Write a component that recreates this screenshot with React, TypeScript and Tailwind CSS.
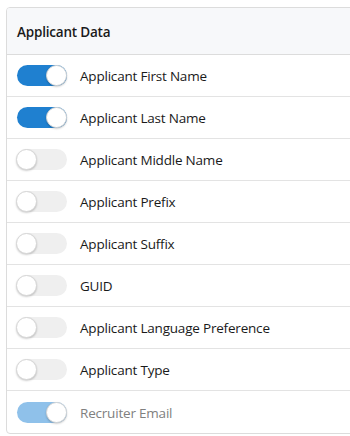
import React from "react";

type Item = { label: string; on: boolean; disabled?: boolean };

const items: Item[] = [
  { label: "Applicant First Name", on: true },
  { label: "Applicant Last Name", on: true },
  { label: "Applicant Middle Name", on: false },
  { label: "Applicant Prefix", on: false },
  { label: "Applicant Suffix", on: false },
  { label: "GUID", on: false },
  { label: "Applicant Language Preference", on: false },
  { label: "Applicant Type", on: false },
  { label: "Recruiter Email", on: true, disabled: true },
];

function Toggle({ on, disabled }: { on: boolean; disabled?: boolean }) {
  const track = on
    ? disabled
      ? "bg-[#8fc1ea]"
      : "bg-[#1f80d0]"
    : "bg-[#efefef]";
  return (
    <div className={`relative w-[50px] h-[21px] rounded-full ${track} shrink-0`}>
      <div
        className={`absolute top-0 ${on ? "right-0" : "left-[-1px]"} w-[21px] h-[21px] rounded-full bg-white border border-[#d6d6d6] shadow-[0_1px_2px_rgba(0,0,0,0.2)]`}
      />
    </div>
  );
}

export default function App() {
  return (
    <div className="w-[350px] h-[436px] bg-white pl-[6px] pt-[7px] font-['Open_Sans',sans-serif]">
      <div className="w-[360px] border border-[#dcdcdc] rounded-[4px] overflow-hidden">
        <div className="h-[47px] bg-[#f7f8fa] border-b border-[#dcdcdc] flex items-center pl-[10px]">
          <span className="mt-[2px] text-[13.5px] font-semibold text-[#1a1a1a] tracking-[-0.2px]">
            Applicant Data
          </span>
        </div>
        {items.map((it, i) => (
          <div
            key={it.label}
            className={`h-[42px] flex items-center pl-[10px] gap-[13px] ${
              i < items.length - 1 ? "border-b border-[#e3e3e3]" : ""
            }`}
          >
            <Toggle on={it.on} disabled={it.disabled} />
            <span
              className={`mt-[2px] text-[13.5px] tracking-[-0.2px] ${
                it.disabled ? "text-[#808080]" : "text-[#1a1a1a]"
              }`}
            >
              {it.label}
            </span>
          </div>
        ))}
      </div>
    </div>
  );
}
